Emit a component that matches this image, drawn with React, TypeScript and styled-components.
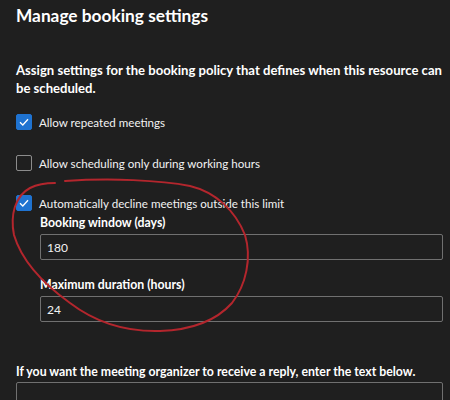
import styled, { createGlobalStyle } from "styled-components";

const GlobalStyle = createGlobalStyle`
  html, body {
    margin: 0;
    padding: 0;
    background: #1f1f1f;
    overflow: hidden;
  }
`;

const Page = styled.div`
  position: relative;
  width: 450px;
  height: 400px;
  box-sizing: border-box;
  padding: 2px 7px 0 16px;
  background: #1f1f1f;
  color: #ffffff;
  font-family: Lato, "Noto Sans", sans-serif;
  overflow: hidden;
`;

const Title = styled.h1`
  margin: 0;
  font-size: 17.3px;
  line-height: 28px;
  font-weight: 700;
`;

const Intro = styled.p`
  margin: 31px -6px 0 0;
  font-size: 13.1px;
  line-height: 18px;
  font-weight: 700;
`;

const OptionRow = styled.label<{ $gap: number }>`
  display: flex;
  align-items: center;
  gap: 7px;
  height: 20px;
  margin-top: ${(p) => p.$gap}px;
  font-size: 11.6px;
  color: #f2f2f2;
`;

const Box = styled.span<{ $checked: boolean }>`
  width: 16px;
  height: 16px;
  box-sizing: border-box;
  border-radius: 2px;
  display: flex;
  align-items: center;
  justify-content: center;
  background: ${(p) => (p.$checked ? "#1f73d1" : "transparent")};
  border: 1px solid ${(p) => (p.$checked ? "#1f73d1" : "#8c8c8c")};
`;

const Nested = styled.div`
  padding-left: 24px;
`;

const FieldLabel = styled.div<{ $gap: number }>`
  margin-top: ${(p) => p.$gap}px;
  font-size: 12.3px;
  line-height: 20px;
  font-weight: 700;
`;

const TextInput = styled.div`
  margin-top: 1px;
  height: 26px;
  box-sizing: border-box;
  border: 1px solid #707070;
  border-radius: 2px;
  padding: 0 6px;
  display: flex;
  align-items: center;
  font-size: 12px;
  color: #f2f2f2;
`;

const ReplyBox = styled.div`
  height: 60px;
  box-sizing: border-box;
  border: 1px solid #707070;
  border-radius: 2px;
`;

const Scribble = styled.svg`
  position: absolute;
  left: 0;
  top: 0;
  pointer-events: none;
`;

function Check({ checked }: { checked: boolean }) {
  return (
    <Box $checked={checked}>
      {checked && (
        <svg width="12" height="12" viewBox="0 0 12 12">
          <path d="M2 6.3 L4.8 9 L10 3.2" fill="none" stroke="#fff" strokeWidth="1.3" />
        </svg>
      )}
    </Box>
  );
}

export default function App() {
  return (
    <Page>
      <GlobalStyle />
      <Title>Manage booking settings</Title>
      <Intro>
        Assign settings for the booking policy that defines when this resource can be scheduled.
      </Intro>
      <OptionRow $gap={15}>
        <Check checked />
        Allow repeated meetings
      </OptionRow>
      <OptionRow $gap={21}>
        <Check checked={false} />
        Allow scheduling only during working hours
      </OptionRow>
      <OptionRow $gap={20}>
        <Check checked />
        Automatically decline meetings outside this limit
      </OptionRow>
      <Nested>
        <FieldLabel $gap={0}>Booking window (days)</FieldLabel>
        <TextInput>180</TextInput>
        <FieldLabel $gap={15}>Maximum duration (hours)</FieldLabel>
        <TextInput>24</TextInput>
      </Nested>
      <FieldLabel $gap={40}>
        If you want the meeting organizer to receive a reply, enter the text below.
      </FieldLabel>
      <ReplyBox />
      <Scribble width="450" height="400" viewBox="0 0 450 400">
        <path
          d="M65 181 C 110 178, 160 180, 190 186 C 215 192, 235 210, 245 235 C 252 258, 246 285, 232 303 C 215 322, 190 330, 160 331 C 125 332, 95 322, 70 303 C 45 285, 22 262, 14 235 C 10 215, 15 196, 30 188 C 38 184, 48 183, 55 183"
          fill="none"
          stroke="#b3262d"
          strokeWidth="2"
          strokeLinecap="round"
        />
      </Scribble>
    </Page>
  );
}
